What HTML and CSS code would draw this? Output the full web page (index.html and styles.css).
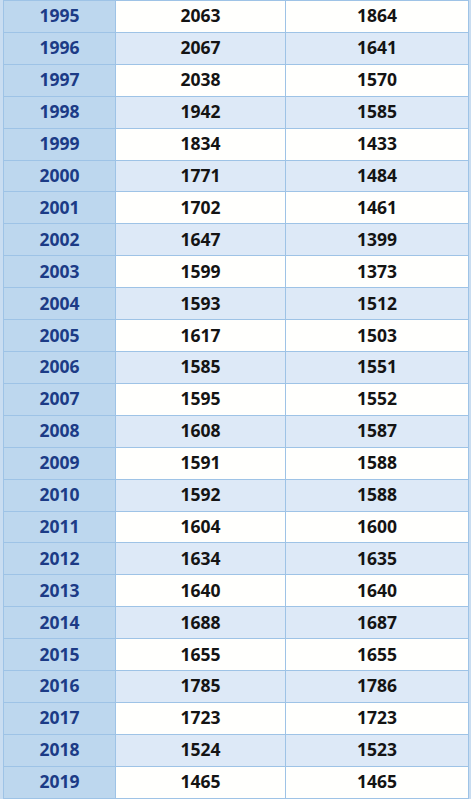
FILE: index.html
```html
<!DOCTYPE html>
<html>
<head>
<meta charset="utf-8">
<link rel="stylesheet" href="styles.css">
</head>
<body>
<table class="data">
<colgroup><col class="c-year"><col class="c-a"><col class="c-b"></colgroup>
<tbody>
<tr><td class="year">1995</td><td>2063</td><td>1864</td></tr>
<tr class="alt"><td class="year">1996</td><td>2067</td><td>1641</td></tr>
<tr><td class="year">1997</td><td>2038</td><td>1570</td></tr>
<tr class="alt"><td class="year">1998</td><td>1942</td><td>1585</td></tr>
<tr><td class="year">1999</td><td>1834</td><td>1433</td></tr>
<tr class="alt"><td class="year">2000</td><td>1771</td><td>1484</td></tr>
<tr><td class="year">2001</td><td>1702</td><td>1461</td></tr>
<tr class="alt"><td class="year">2002</td><td>1647</td><td>1399</td></tr>
<tr><td class="year">2003</td><td>1599</td><td>1373</td></tr>
<tr class="alt"><td class="year">2004</td><td>1593</td><td>1512</td></tr>
<tr><td class="year">2005</td><td>1617</td><td>1503</td></tr>
<tr class="alt"><td class="year">2006</td><td>1585</td><td>1551</td></tr>
<tr><td class="year">2007</td><td>1595</td><td>1552</td></tr>
<tr class="alt"><td class="year">2008</td><td>1608</td><td>1587</td></tr>
<tr><td class="year">2009</td><td>1591</td><td>1588</td></tr>
<tr class="alt"><td class="year">2010</td><td>1592</td><td>1588</td></tr>
<tr><td class="year">2011</td><td>1604</td><td>1600</td></tr>
<tr class="alt"><td class="year">2012</td><td>1634</td><td>1635</td></tr>
<tr><td class="year">2013</td><td>1640</td><td>1640</td></tr>
<tr class="alt"><td class="year">2014</td><td>1688</td><td>1687</td></tr>
<tr><td class="year">2015</td><td>1655</td><td>1655</td></tr>
<tr class="alt"><td class="year">2016</td><td>1785</td><td>1786</td></tr>
<tr><td class="year">2017</td><td>1723</td><td>1723</td></tr>
<tr class="alt"><td class="year">2018</td><td>1524</td><td>1523</td></tr>
<tr><td class="year">2019</td><td>1465</td><td>1465</td></tr>
</tbody>
</table>
</body>
</html>
```
FILE: styles.css
```css
html, body {
  margin: 0;
  padding: 0;
}
body {
  background: #c9ddf1;
  font-family: "Open Sans", "Liberation Sans", sans-serif;
  overflow: hidden;
}
.data {
  border-collapse: collapse;
  table-layout: fixed;
  width: 465px;
  margin-left: 3px;
}
.c-year { width: 112px; }
.c-a { width: 170px; }
.c-b { width: 183px; }
.data td {
  border: 1px solid #9ec3e6;
  height: 28.92px;
  padding: 0 0 2px 0;
  text-align: center;
  vertical-align: middle;
  font-weight: 700;
  font-size: 17.5px;
  line-height: 20px;
  color: #141414;
  background: #fffffd;
}
.data tr.alt td {
  background: #dde9f7;
}
.data td.year,
.data tr.alt td.year {
  background: #bdd7ee;
  color: #1c3b86;
}
```
